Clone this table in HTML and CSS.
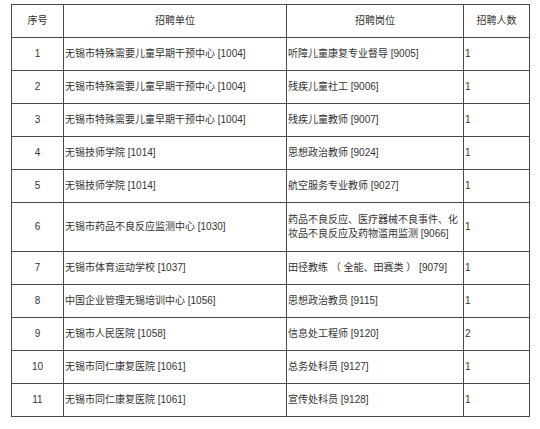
FILE: index.html
```html
<!DOCTYPE html>
<html lang="zh-CN">
<head>
<meta charset="utf-8">
<link rel="stylesheet" href="styles.css">
</head>
<body>
<table class="jobs">
  <colgroup>
    <col class="c-no">
    <col class="c-unit">
    <col class="c-post">
    <col class="c-num">
  </colgroup>
  <thead>
    <tr class="row">
      <th>序号</th>
      <th>招聘单位</th>
      <th>招聘岗位</th>
      <th>招聘人数</th>
    </tr>
  </thead>
  <tbody>
    <tr class="row"><td class="no">1</td><td>无锡市特殊需要儿童早期干预中心 [1004]</td><td>听障儿童康复专业督导 [9005]</td><td>1</td></tr>
    <tr class="row"><td class="no">2</td><td>无锡市特殊需要儿童早期干预中心 [1004]</td><td>残疾儿童社工 [9006]</td><td>1</td></tr>
    <tr class="row"><td class="no">3</td><td>无锡市特殊需要儿童早期干预中心 [1004]</td><td>残疾儿童教师 [9007]</td><td>1</td></tr>
    <tr class="row"><td class="no">4</td><td>无锡技师学院 [1014]</td><td>思想政治教师 [9024]</td><td>1</td></tr>
    <tr class="row"><td class="no">5</td><td>无锡技师学院 [1014]</td><td>航空服务专业教师 [9027]</td><td>1</td></tr>
    <tr class="row tall"><td class="no">6</td><td>无锡市药品不良反应监测中心 [1030]</td><td>药品不良反应、医疗器械不良事件、化妆品不良反应及药物滥用监测 [9066]</td><td>1</td></tr>
    <tr class="row"><td class="no">7</td><td>无锡市体育运动学校 [1037]</td><td>田径教练 （ 全能、田赛类 ） [9079]</td><td>1</td></tr>
    <tr class="row"><td class="no">8</td><td>中国企业管理无锡培训中心 [1056]</td><td>思想政治教员 [9115]</td><td>1</td></tr>
    <tr class="row"><td class="no">9</td><td>无锡市人民医院 [1058]</td><td>信息处工程师 [9120]</td><td>2</td></tr>
    <tr class="row"><td class="no">10</td><td>无锡市同仁康复医院 [1061]</td><td>总务处科员 [9127]</td><td>1</td></tr>
    <tr class="row"><td class="no">11</td><td>无锡市同仁康复医院 [1061]</td><td>宣传处科员 [9128]</td><td>1</td></tr>
  </tbody>
</table>
</body>
</html>
```

FILE: styles.css
```css
html, body {
  margin: 0;
  padding: 0;
  background: #ffffff;
}

body {
  padding: 4px 0 0 11px;
  font-family: "Liberation Sans", "Noto Sans CJK SC", sans-serif;
  font-size: 10px;
  color: #333333;
}

.jobs {
  border-collapse: collapse;
  table-layout: fixed;
  width: 518px;
}

.c-no { width: 52px; }
.c-unit { width: 223px; }
.c-post { width: 177px; }
.c-num { width: 66px; }

.jobs th,
.jobs td {
  border: 1px solid #4a4a4a;
  padding: 0 1px;
  text-align: left;
  vertical-align: middle;
  font-weight: normal;
  line-height: 14px;
}

.jobs th {
  text-align: center;
}

.jobs td.no {
  text-align: center;
}

.row {
  height: 33px;
}

.row.tall {
  height: 49px;
}
```
